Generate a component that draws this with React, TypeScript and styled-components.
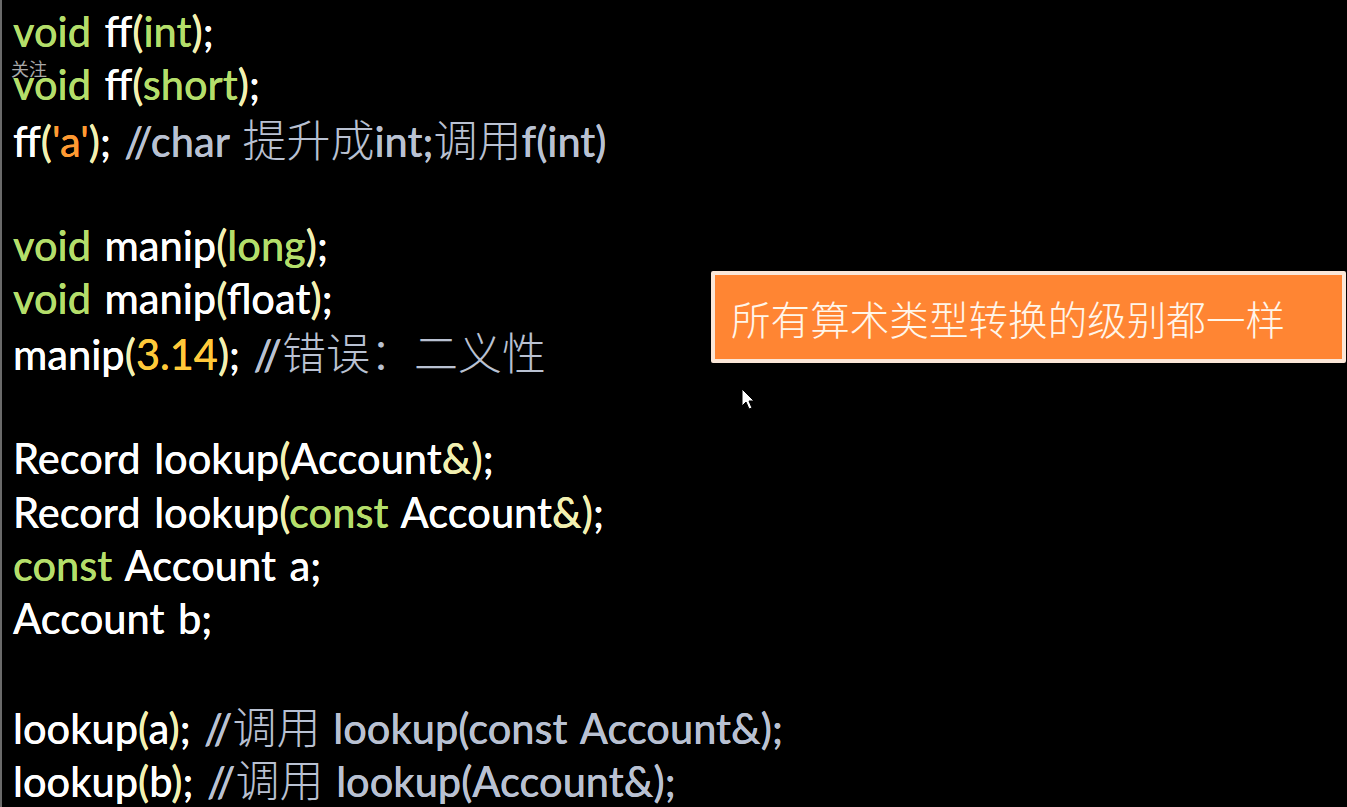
import React from "react";
import styled, { createGlobalStyle } from "styled-components";

const Global = createGlobalStyle`
  html, body { margin: 0; padding: 0; background: #000; }
  body { width: 1347px; height: 807px; overflow: hidden; }
`;

const Screen = styled.div`
  position: relative;
  width: 1347px;
  height: 807px;
  background: #000;
  box-sizing: border-box;
  border-left: 2px solid #6a6a6a;
  overflow: hidden;
`;

const Code = styled.div`
  display: flex;
  flex-direction: column;
  padding: 5px 0 0 11px;
  font-family: Lato, "Noto Sans CJK SC", sans-serif;
  font-size: 41.5px;
  font-weight: 500;
  word-spacing: 3px;
  color: #ffffff;
`;

const Line = styled.div`
  height: 53.4px;
  line-height: 53.4px;
  white-space: pre;
`;

const colors: Record<string, string> = {
  kw: "#b4de6a",
  p: "#f2f0b0",
  c: "#b9c1d2",
  n: "#ffc93a",
  s: "#ff9a32",
  w: "#ffffff",
};

const Tok = styled.span<{ $c: string }>`
  color: ${(p) => colors[p.$c]};
  text-shadow: 0 0 0.6px ${(p) => colors[p.$c]};
`;

const Cjk = styled.span`
  font-family: "Noto Sans CJK SC", sans-serif;
  font-weight: 300;
  font-size: 44px;
  text-shadow: none;
`;

const Follow = styled.div`
  position: absolute;
  left: 9px;
  top: 55px;
  font-family: "Noto Sans CJK SC", sans-serif;
  font-size: 18px;
  color: #a8a8a8;
`;

const Callout = styled.div`
  position: absolute;
  left: 709px;
  top: 271px;
  width: 635px;
  height: 92px;
  box-sizing: border-box;
  border: 4px solid #fbe7d8;
  border-radius: 2px;
  background: #ff8533;
  display: flex;
  align-items: center;
  padding-left: 16px;
  font-family: "Noto Sans CJK SC", sans-serif;
  font-weight: 300;
  font-size: 39.6px;
  color: #fff6ea;
`;

const Cursor = styled.svg`
  position: absolute;
  left: 739px;
  top: 388px;
`;

type T = [string, string];
const L = (...t: T[]) => t;

const lines: (T[] | null)[] = [
  L(["kw", "void"], ["w", " ff"], ["p", "("], ["kw", "int"], ["p", ")"], ["w", ";"]),
  L(["kw", "void"], ["w", " ff"], ["p", "("], ["kw", "short"], ["p", ")"], ["w", ";"]),
  L(["w", "ff"], ["p", "("], ["s", "'a'"], ["p", ")"], ["w", "; "], ["c", "//char "], ["cj", "提升成"], ["c", "int;"], ["cj", "调用"], ["c", "f(int)"]),
  null,
  L(["kw", "void"], ["w", " manip"], ["p", "("], ["kw", "long"], ["p", ")"], ["w", ";"]),
  L(["kw", "void"], ["w", " manip"], ["p", "("], ["w", "float"], ["p", ")"], ["w", ";"]),
  L(["w", "manip"], ["p", "("], ["n", "3.14"], ["p", ")"], ["w", "; "], ["c", "//"], ["cj", "错误：二义性"]),
  null,
  L(["w", "Record lookup"], ["p", "("], ["w", "Account"], ["p", "&"], ["p", ")"], ["w", ";"]),
  L(["w", "Record lookup"], ["p", "("], ["kw", "const"], ["w", " Account"], ["p", "&"], ["p", ")"], ["w", ";"]),
  L(["kw", "const"], ["w", " Account a;"]),
  L(["w", "Account b;"]),
  null,
  L(["w", "lookup"], ["p", "("], ["w", "a"], ["p", ")"], ["w", "; "], ["c", "//"], ["cj", "调用 "], ["c", "lookup(const Account&);"]),
  L(["w", "lookup"], ["p", "("], ["w", "b"], ["p", ")"], ["w", "; "], ["c", "//"], ["cj", "调用 "], ["c", "lookup(Account&);"]),
];

export default function App() {
  return (
    <>
      <Global />
      <Screen>
        <Code>
          {lines.map((ln, i) => (
            <Line key={i}>
              {ln
                ? ln.map(([c, t], j) =>
                    c === "cj" ? (
                      <Tok key={j} $c="c">
                        <Cjk>{t}</Cjk>
                      </Tok>
                    ) : (
                      <Tok key={j} $c={c}>
                        {t}
                      </Tok>
                    )
                  )
                : " "}
            </Line>
          ))}
        </Code>
        <Follow>关注</Follow>
        <Callout>所有算术类型转换的级别都一样</Callout>
        <Cursor width="16" height="24" viewBox="0 0 16 24">
          <path d="M1 1 L1 18 L5 14 L8 21 L11 20 L8 13 L13 13 Z" fill="#fff" stroke="#000" strokeWidth="1" />
        </Cursor>
      </Screen>
    </>
  );
}
